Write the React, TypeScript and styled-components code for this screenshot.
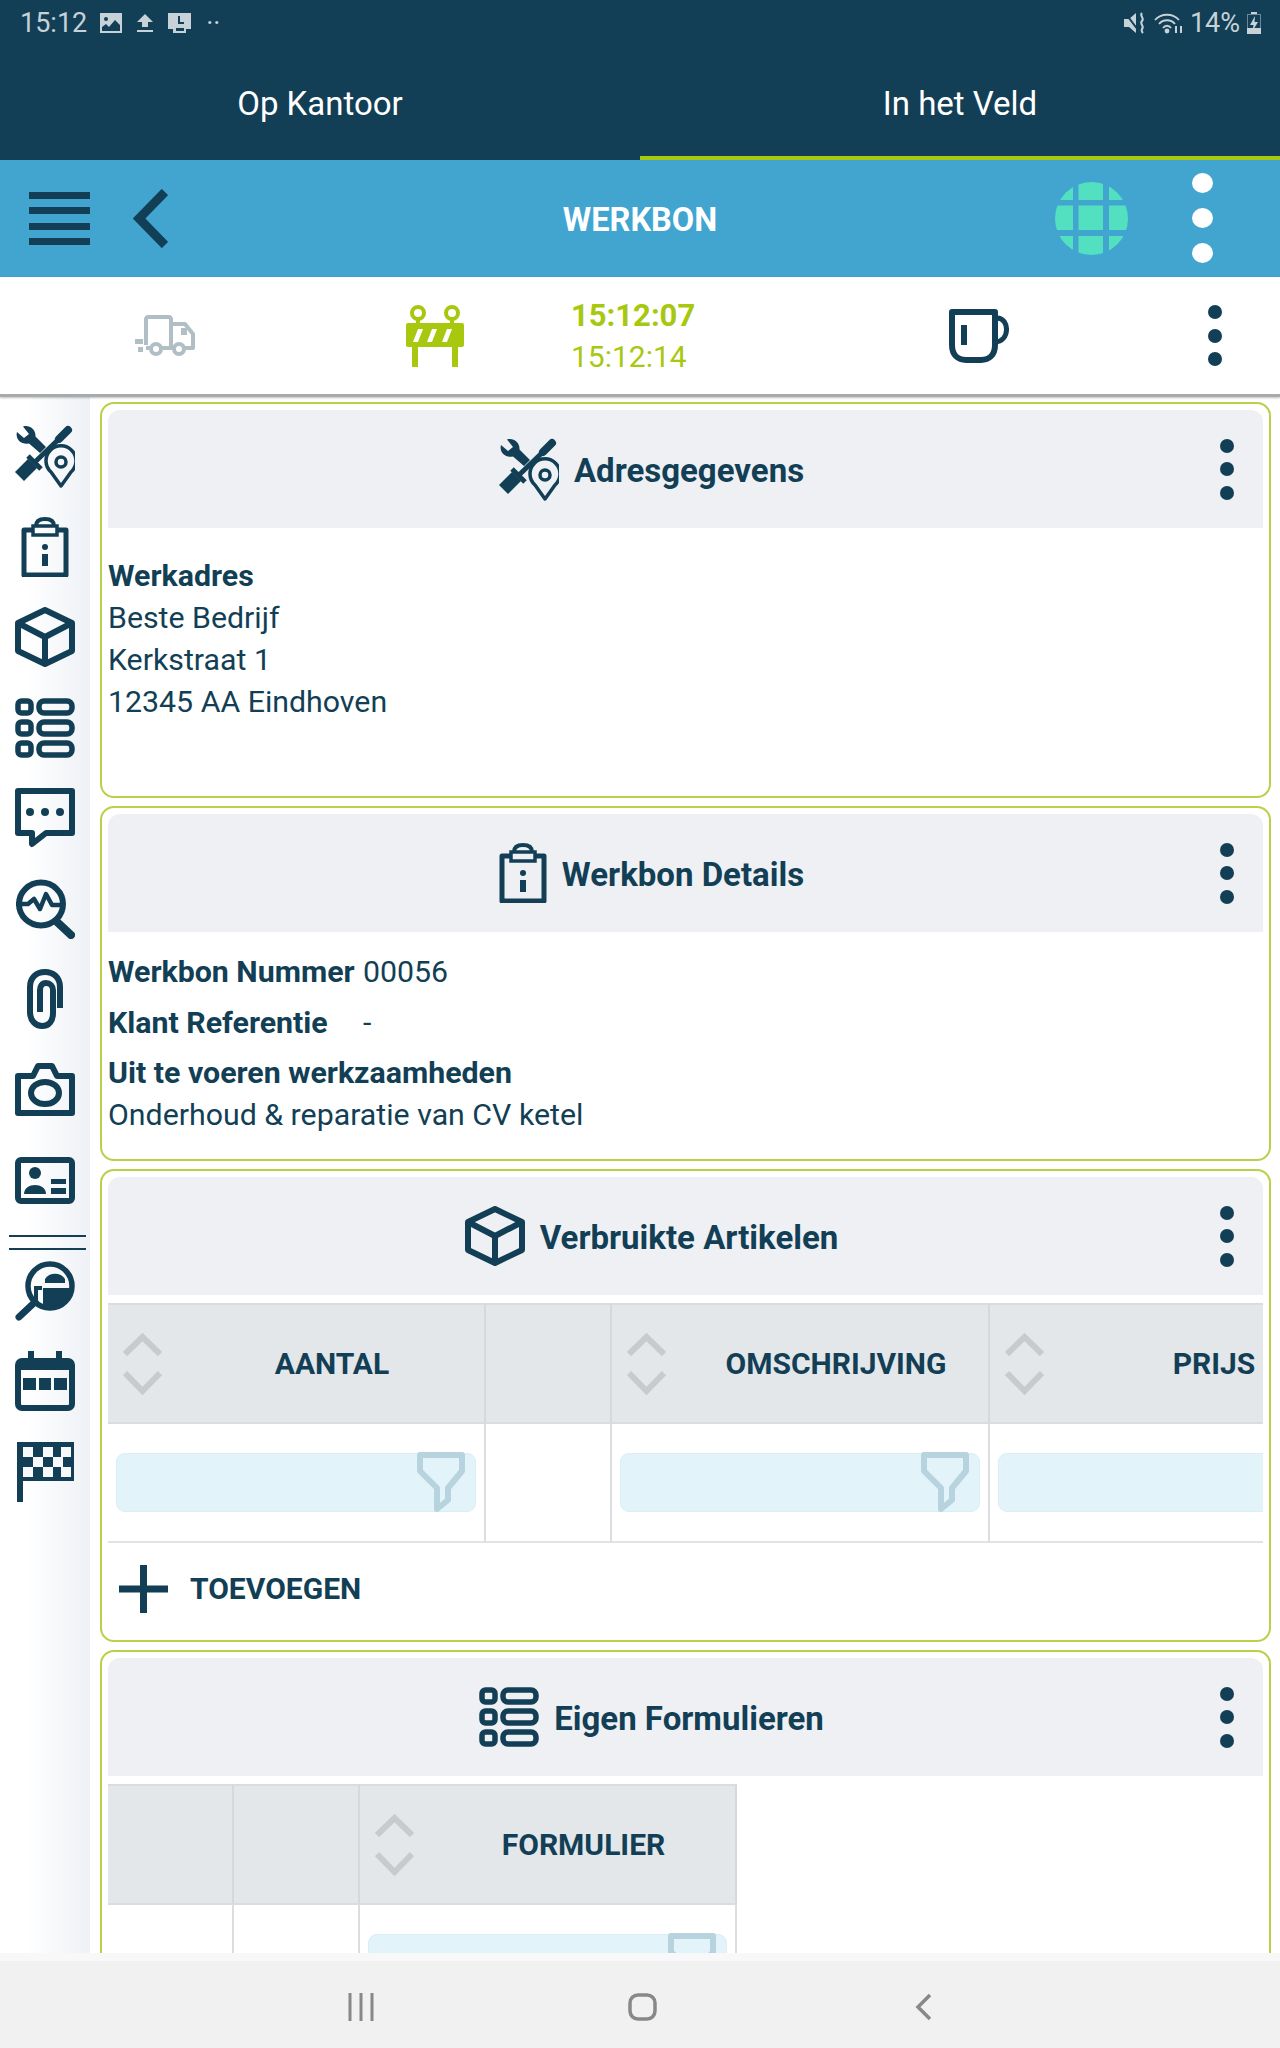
import React from "react"
import styled, { createGlobalStyle } from "styled-components"

const NAVY = "#123f55"
const LIME = "#a7c80f"
const MUTED = "#c6d2d8"

const GlobalStyle = createGlobalStyle`
  html, body {
    margin: 0;
    padding: 0;
    background: #fff;
  }
  body {
    font-family: Roboto, "Liberation Sans", sans-serif;
    color: ${NAVY};
  }
  * {
    box-sizing: border-box;
  }
`

const Page = styled.div`
  width: 1280px;
  height: 2048px;
  display: flex;
  flex-direction: column;
  overflow: hidden;
`

const DarkHeader = styled.header`
  height: 160px;
  flex: none;
  background: ${NAVY};
  display: flex;
  flex-direction: column;
`

const StatusBar = styled.div`
  height: 46px;
  flex: none;
  display: flex;
  align-items: center;
  padding: 0 19px 0 20px;
  color: ${MUTED};
  font-size: 27px;
`

const StatusTime = styled.span`
  margin-right: 13px;
`

const StatusIcons = styled.div`
  display: flex;
  align-items: center;
  gap: 15px;
`

const StatusRight = styled.div`
  margin-left: auto;
  display: flex;
  align-items: center;
  gap: 7px;
`

const Tabs = styled.nav`
  flex: 1;
  display: grid;
  grid-template-columns: 1fr 1fr;
`

const Tab = styled.div<{ $active?: boolean }>`
  display: flex;
  align-items: center;
  justify-content: center;
  padding-top: 4px;
  color: #fff;
  font-size: 33px;
  border-bottom: 4px solid ${(p) => (p.$active ? LIME : "transparent")};
`

const BlueBar = styled.div`
  height: 117px;
  flex: none;
  background: #41a5d0;
  display: grid;
  grid-template-columns: 1fr auto 1fr;
  align-items: center;
  padding-left: 29px;
  padding-right: 67px;
`

const BlueLeft = styled.div`
  display: flex;
  align-items: center;
  gap: 43px;
  color: ${NAVY};
`

const BlueRight = styled.div`
  display: flex;
  align-items: center;
  justify-content: flex-end;
  gap: 64px;
`

const PageTitle = styled.div`
  color: #fff;
  font-size: 32.5px;
  font-weight: 700;
  margin-left: 19px;
  margin-right: -19px;
  margin-top: 2px;
`

const BigDots = styled.div`
  display: flex;
  flex-direction: column;
  gap: 15px;
  margin-top: -2px;
`

const BigDot = styled.span`
  display: block;
  width: 21px;
  height: 20px;
  border-radius: 50%;
  background: #fff;
`

const ActionBar = styled.div`
  height: 120px;
  flex: none;
  background: #fff;
  display: grid;
  grid-template-columns: 330px 210px 310px 258px 172px;
  align-items: center;
  border-bottom: 3px solid #a8abac;
  box-shadow: 0 1px 2px rgba(0, 0, 0, 0.25);
  position: relative;
  z-index: 1;
`

const ActionCell = styled.div`
  display: flex;
  justify-content: center;
  align-items: center;
`

const DotsCell = styled.div`
  display: flex;
  justify-content: flex-end;
  padding-right: 58px;
`

const Clock = styled.div`
  padding-left: 31px;
  color: ${LIME};
  font-size: 30px;
  line-height: 41px;
`

const ClockStart = styled.div`
  font-weight: 700;
  font-size: 31px;
`

const Dots = styled.div`
  display: flex;
  flex-direction: column;
  gap: 9.5px;
`

const Dot = styled.span`
  display: block;
  width: 14px;
  height: 14px;
  border-radius: 50%;
  background: ${NAVY};
`

const Main = styled.main`
  height: 1556px;
  flex: none;
  display: flex;
  overflow: hidden;
`

const Sidebar = styled.aside`
  width: 90px;
  flex: none;
  padding-top: 14px;
  background: linear-gradient(90deg, #fff 30%, #eef1f6 100%);
  color: ${NAVY};
`

const SideItem = styled.div`
  height: 90.5px;
  display: flex;
  align-items: center;
  justify-content: center;
`

const SideDivider = styled.div`
  height: 20px;
  margin: 0 4px 0 9px;
  padding-top: 9px;
  &::before {
    content: "";
    display: block;
    height: 11px;
    border-top: 2px solid ${NAVY};
    border-bottom: 2px solid ${NAVY};
  }
`

const Content = styled.div`
  flex: 1;
  min-width: 0;
  padding: 5px 9px 0 10px;
  display: flex;
  flex-direction: column;
  gap: 8px;
`

const Card = styled.section`
  flex: none;
  border: 2px solid #b8d04a;
  border-radius: 14px;
  padding: 6px;
  background: #fff;
`

const CardHeader = styled.div`
  height: 118px;
  background: #eef0f4;
  border-radius: 12px 12px 0 0;
  display: flex;
  align-items: center;
`

const CardHeading = styled.div`
  flex: 1;
  display: flex;
  align-items: center;
  justify-content: center;
  gap: 15px;
  font-size: 33px;
  font-weight: 700;
`

const HeadingText = styled.span`
  margin-top: 3px;
`

const HeaderDots = styled.div`
  width: 68px;
  padding-right: 4px;
  display: flex;
  justify-content: center;
`

const AddressBody = styled.div`
  padding: 27px 0 67px;
  font-size: 30.3px;
  line-height: 42px;
`

const Strong = styled.div`
  font-weight: 700;
`

const DetailsBody = styled.div`
  padding: 19px 0 17px;
  font-size: 30.3px;
  line-height: 42px;
`

const DetailRow = styled.div`
  display: grid;
  grid-template-columns: 255px 1fr;
  margin-bottom: 8.5px;
`

const TableWrap = styled.div`
  margin-top: 8px;
  overflow: hidden;
`

const Table = styled.div<{ $columns: string }>`
  display: grid;
  grid-template-columns: ${(p) => p.$columns};
  width: max-content;
`

const HeadCell = styled.div`
  height: 121px;
  background: #e3e7ea;
  border-top: 2px solid #dbdcdc;
  border-bottom: 2px solid #dbdcdc;
  border-right: 2px solid #d6d8d9;
  display: flex;
  align-items: center;
  padding-left: 15px;
  font-size: 30px;
  font-weight: 700;
`

const HeadLabel = styled.span`
  flex: 1;
  text-align: center;
  padding-left: 18px;
`

const FilterCell = styled.div`
  height: 119px;
  border-bottom: 2px solid #e2e3e4;
  border-right: 2px solid #dcddde;
  padding: 29px 8px 0 8px;
  &:first-child {
    border-left: 2px solid #e2e3e4;
  }
`

const FilterInput = styled.div`
  position: relative;
  height: 59px;
  background: #e2f4fa;
  border: 1px solid #dcedf3;
  border-radius: 9px;
`

const FilterIconSlot = styled.div`
  position: absolute;
  top: -2px;
  right: 10px;
`

const AddRow = styled.div`
  height: 91px;
  display: flex;
  align-items: center;
  padding-left: 11px;
  gap: 22px;
  font-size: 30px;
  font-weight: 700;
  color: ${NAVY};
`

const ScreenGap = styled.div`
  height: 8px;
  flex: none;
  background: #f8f8f8;
`

const BottomNav = styled.footer`
  flex: 1;
  background: #f1f1f1;
  display: grid;
  grid-template-columns: repeat(3, 281px);
  justify-content: center;
  align-items: center;
  padding-left: 4px;
  padding-top: 4px;
`

const NavCell = styled.div`
  display: flex;
  justify-content: center;
`

const ToolsIcon = () => (
  <svg width="60" height="63" viewBox="0 0 60 63" fill="currentColor">
    <path d="M2 7L9 13L14 9L8 1.5C14-.5 21 4 20.5 11.5L31 22L25 28L14 18.5C6 20 0 14 2 7Z" />
    <path d="M0 47L9 56L22 43L13 34Z" />
    <path d="M13 31L26 44" stroke="currentColor" strokeWidth="5" />
    <path d="M20 37L46 12" stroke="currentColor" strokeWidth="5" />
    <path d="M44 14L53 5" stroke="currentColor" strokeWidth="8" strokeLinecap="round" />
    <path
      d="M46 61L36 47A15 15 0 1 1 56 47Z"
      fill="none"
      stroke="currentColor"
      strokeWidth="3.5"
      strokeLinejoin="round"
    />
    <circle cx="46" cy="37" r="5" fill="none" stroke="currentColor" strokeWidth="3.5" />
  </svg>
)

const ClipboardIcon = () => (
  <svg width="48" height="60" viewBox="0 0 48 60" fill="currentColor">
    <path d="M12 13H3V58H45V13H36" fill="none" stroke="currentColor" strokeWidth="5" strokeLinejoin="round" />
    <path d="M15 9C15 4 19 2 24 2C29 2 33 4 33 9" fill="none" stroke="currentColor" strokeWidth="4" />
    <rect x="12" y="9" width="24" height="9" fill="none" stroke="currentColor" strokeWidth="3.5" />
    <circle cx="24" cy="30" r="3" />
    <rect x="21" y="37" width="6" height="12" />
  </svg>
)

const BoxIcon = () => (
  <svg
    width="60"
    height="60"
    viewBox="0 0 60 60"
    fill="none"
    stroke="currentColor"
    strokeWidth="6"
    strokeLinejoin="round"
  >
    <path d="M30 3L57 16V44L30 57L3 44V16Z" />
    <path d="M3 16L30 30L57 16M30 30V57" />
  </svg>
)

const FormsIcon = () => (
  <svg width="60" height="60" viewBox="0 0 60 60" fill="none" stroke="currentColor" strokeWidth="5.5">
    {[0, 21, 42].map((y) => (
      <g key={y}>
        <rect x="3" y={y + 3} width="13" height="12" rx="3.5" />
        <rect x="24" y={y + 3} width="33" height="12" rx="5" />
      </g>
    ))}
  </svg>
)

const CommentIcon = () => (
  <svg width="60" height="60" viewBox="0 0 60 60" fill="currentColor">
    <path
      d="M3 3H57V45H31L17 56V45H3Z"
      fill="none"
      stroke="currentColor"
      strokeWidth="6"
      strokeLinejoin="round"
    />
    <circle cx="15" cy="24" r="4" />
    <circle cx="30" cy="24" r="4" />
    <circle cx="45" cy="24" r="4" />
  </svg>
)

const AnalyticsIcon = () => (
  <svg width="60" height="60" viewBox="0 0 60 60" fill="none" stroke="currentColor">
    <ellipse cx="26" cy="25" rx="22" ry="21.5" strokeWidth="6" />
    <path d="M41 42L56 56" strokeWidth="8" strokeLinecap="round" />
    <path d="M1 25H13L19 20L25 30L31 15L37 26H49" strokeWidth="4.5" strokeLinejoin="round" />
  </svg>
)

const ClipIcon = () => (
  <svg width="38" height="60" viewBox="0 0 38 60" fill="none" stroke="currentColor" strokeWidth="6">
    <path d="M34 39V18C34 8 27 3 19 3C10 3 4 9 4 18V43C4 52 10 57 16 57C23 57 27 52 27 44V21C27 17 24 14 20 14C16 14 14 17 14 21V43" />
  </svg>
)

const CameraIcon = () => (
  <svg width="60" height="53" viewBox="0 0 60 53" fill="none" stroke="currentColor" strokeWidth="6" strokeLinejoin="round">
    <path d="M3 13H18L23 3H37L42 13H57V50H3Z" />
    <ellipse cx="30" cy="30" rx="14" ry="11" />
  </svg>
)

const IdCardIcon = () => (
  <svg width="60" height="47" viewBox="0 0 60 47" fill="currentColor">
    <rect x="3" y="3" width="54" height="41" rx="3" fill="none" stroke="currentColor" strokeWidth="6" />
    <circle cx="20" cy="16" r="6" />
    <path d="M9 37C9 25 31 25 31 37Z" />
    <rect x="36" y="22" width="15" height="5" />
    <rect x="36" y="31" width="15" height="6" />
  </svg>
)

const SearchFolderIcon = () => (
  <svg width="60" height="60" viewBox="0 0 60 60" fill="currentColor">
    <circle cx="35" cy="25" r="22" fill="none" stroke="currentColor" strokeWidth="5.5" />
    <path d="M20 41L4 56" stroke="currentColor" strokeWidth="7" strokeLinecap="round" />
    <path d="M21 43V27H27" fill="none" stroke="currentColor" strokeWidth="4" />
    <path d="M30 18C34 11 46 11 50 18V22H30Z" />
    <path d="M28 27H56C56 34 50 43 36 45H28Z" />
  </svg>
)

const CalendarIcon = () => (
  <svg width="60" height="60" viewBox="0 0 60 60" fill="currentColor">
    <rect x="3" y="10" width="54" height="47" rx="4" fill="none" stroke="currentColor" strokeWidth="6" />
    <rect x="2" y="9" width="56" height="10" />
    <rect x="13" y="0" width="6" height="12" />
    <rect x="41" y="0" width="6" height="12" />
    <rect x="8" y="27" width="13" height="12" />
    <rect x="24" y="27" width="12" height="12" />
    <rect x="39" y="27" width="13" height="12" />
  </svg>
)

const FlagIcon = () => (
  <svg width="57" height="60" viewBox="0 0 57 60" fill="currentColor">
    <rect x="0" y="0" width="6" height="60" />
    <rect x="0" y="0" width="57" height="39" />
    {[
      [6, 5],
      [26, 5],
      [44, 5],
      [16, 15],
      [36, 15],
      [6, 25],
      [26, 25],
      [44, 25],
    ].map(([x, y]) => (
      <rect key={`${x}-${y}`} x={x} y={y} width="10" height="10" fill="#f6f8fa" />
    ))}
  </svg>
)

const TruckIcon = () => (
  <svg width="60" height="41" viewBox="0 0 60 41" fill="#b0bec5">
    <path d="M11 30V4C11 3 12 2 13 2H34C35 2 36 3 36 4V32" fill="none" stroke="#b0bec5" strokeWidth="4" />
    <path d="M36 9H50L58 19V33H36" fill="none" stroke="#b0bec5" strokeWidth="4" strokeLinejoin="round" />
    <rect x="46" y="13" width="6" height="7" />
    <path d="M11 33H50" stroke="#b0bec5" strokeWidth="4" />
    <circle cx="21" cy="34" r="5" fill="#fff" stroke="#b0bec5" strokeWidth="4" />
    <circle cx="44" cy="34" r="5" fill="#fff" stroke="#b0bec5" strokeWidth="4" />
    <rect x="0" y="24" width="8" height="5" />
    <rect x="3" y="32" width="5" height="5" />
  </svg>
)

const BarrierIcon = () => (
  <svg width="58" height="62" viewBox="0 0 58 62" fill={LIME}>
    <circle cx="12" cy="8" r="6" fill="none" stroke={LIME} strokeWidth="4" />
    <circle cx="46" cy="8" r="6" fill="none" stroke={LIME} strokeWidth="4" />
    <rect x="10" y="13" width="4" height="6" />
    <rect x="44" y="13" width="4" height="6" />
    <rect x="0" y="18" width="58" height="24" rx="2" />
    <path d="M7 37L12 24H17L12 37ZM21 37L26 24H31L26 37ZM36 37L41 24H46L41 37Z" fill="#fff" />
    <rect x="6" y="41" width="6" height="21" />
    <rect x="46" y="41" width="6" height="21" />
  </svg>
)

const MugIcon = () => (
  <svg width="60" height="54" viewBox="0 0 60 54" fill={NAVY} stroke="none">
    <path
      d="M3 3H46V36C46 46 40 51 32 51H17C9 51 3 46 3 36Z"
      fill="none"
      stroke={NAVY}
      strokeWidth="6"
      strokeLinejoin="round"
    />
    <path d="M48 9C61 9 61 33 46 33" fill="none" stroke={NAVY} strokeWidth="5" />
    <rect x="12" y="16" width="6" height="20" />
  </svg>
)

const GlobeIcon = () => {
  const bands: [number, number][] = [
    [0, 18],
    [23.5, 24.5],
    [54, 19],
  ]
  return (
    <svg width="73" height="73" viewBox="0 0 73 73" fill="#52e0c0">
      <defs>
        <clipPath id="globe-clip">
          <circle cx="36.5" cy="36.5" r="36.5" />
        </clipPath>
      </defs>
      <g clipPath="url(#globe-clip)">
        {bands.map(([x, w]) =>
          bands.map(([y, h]) => <rect key={`${x}-${y}`} x={x} y={y} width={w} height={h} />)
        )}
      </g>
    </svg>
  )
}

const HamburgerIcon = () => (
  <svg width="61" height="53" viewBox="0 0 61 53" fill="currentColor">
    <rect y="0" width="61" height="7" />
    <rect y="15" width="61" height="7" />
    <rect y="31" width="61" height="7" />
    <rect y="46" width="61" height="7" />
  </svg>
)

const BackIcon = () => (
  <svg width="35" height="59" viewBox="0 0 35 59" fill="none" stroke="currentColor" strokeWidth="9">
    <path d="M32 3L6 29.5L32 56" />
  </svg>
)

const SortIcon = () => (
  <svg width="39" height="62" viewBox="0 0 39 62" fill="none" stroke="#c8cacb" strokeWidth="6">
    <path d="M2 21L19.5 4L37 21" />
    <path d="M2 40L19.5 58L37 40" />
  </svg>
)

const FilterIcon = () => (
  <svg width="48" height="60" viewBox="0 0 48 60" fill="none" stroke="#b7d4de" strokeWidth="6" strokeLinejoin="round">
    <path d="M3 3H45V19L31 36V48L20 57V36L3 19Z" />
  </svg>
)

const PlusIcon = () => (
  <svg width="49" height="48" viewBox="0 0 49 48" fill="currentColor">
    <rect x="21" y="0" width="7" height="48" />
    <rect x="0" y="20.5" width="49" height="7" />
  </svg>
)

const ImageStatusIcon = () => (
  <svg width="22" height="20" viewBox="0 0 22 20" fill={MUTED}>
    <path d="M0 0H22V20H0ZM2 14V18H20V12L15 7L9 14L6 11Z" fillRule="evenodd" />
    <circle cx="6" cy="6" r="2" fill={NAVY} />
  </svg>
)

const UploadStatusIcon = () => (
  <svg width="16" height="18" viewBox="0 0 16 18" fill={MUTED}>
    <path d="M8 0L16 8H11V13H5V8H0Z" />
    <rect y="16" width="16" height="2" />
  </svg>
)

const SaveStatusIcon = () => (
  <svg width="23" height="20" viewBox="0 0 23 20" fill={MUTED}>
    <path d="M0 0H23V16H18V20H5V16H0Z" />
    <path d="M11 3V10H16" fill="none" stroke={NAVY} strokeWidth="2" />
    <rect x="8" y="15" width="8" height="3" fill={NAVY} />
  </svg>
)

const MuteStatusIcon = () => (
  <svg width="23" height="22" viewBox="0 0 23 22" fill={MUTED}>
    <path d="M0 7H5L12 1V21L5 15H0Z" />
    <path d="M2 2L14 18" stroke={NAVY} strokeWidth="2" />
    <path d="M18 1C15 4 21 6 18 9C15 12 21 14 18 17C17 19 18 20 19 21" fill="none" stroke={MUTED} strokeWidth="2" />
  </svg>
)

const WifiStatusIcon = () => (
  <svg width="29" height="21" viewBox="0 0 29 21" fill="none" stroke={MUTED} strokeWidth="1.8">
    <path d="M1 7C7 0 19 0 25 7" />
    <path d="M5 11C9 6 17 6 21 11" />
    <path d="M9 15C11 12 15 12 17 15" />
    <circle cx="13" cy="18" r="1.5" fill={MUTED} />
    <path d="M22 20V13M27 13V20" strokeWidth="2" />
  </svg>
)

const BatteryStatusIcon = () => (
  <svg width="14" height="22" viewBox="0 0 14 22" fill={MUTED}>
    <rect x="4" y="0" width="6" height="2" />
    <rect x="0.5" y="2.5" width="13" height="19" fill="none" stroke={MUTED} opacity="0.5" />
    <rect x="0" y="16" width="14" height="6" />
    <path d="M8 4L3 13H6.5L5.5 19L11 10H7.5Z" />
  </svg>
)

const MoreDots = () => (
  <Dots>
    <Dot />
    <Dot />
    <Dot />
  </Dots>
)

const sideIconsTop = [
  ToolsIcon,
  ClipboardIcon,
  BoxIcon,
  FormsIcon,
  CommentIcon,
  AnalyticsIcon,
  ClipIcon,
  CameraIcon,
  IdCardIcon,
]
const sideIconsBottom = [SearchFolderIcon, CalendarIcon, FlagIcon]

interface SectionProps {
  icon: React.ReactNode
  title: string
  children: React.ReactNode
}

const Section: React.FC<SectionProps> = ({ icon, title, children }) => (
  <Card>
    <CardHeader>
      <CardHeading>
        {icon}
        <HeadingText>{title}</HeadingText>
      </CardHeading>
      <HeaderDots>
        <MoreDots />
      </HeaderDots>
    </CardHeader>
    {children}
  </Card>
)

const FilterField = () => (
  <FilterCell>
    <FilterInput>
      <FilterIconSlot>
        <FilterIcon />
      </FilterIconSlot>
    </FilterInput>
  </FilterCell>
)

const SortHead: React.FC<{ label: string }> = ({ label }) => (
  <HeadCell>
    <SortIcon />
    <HeadLabel>{label}</HeadLabel>
  </HeadCell>
)

const App: React.FC = () => {
  return (
    <Page>
      <GlobalStyle />
      <DarkHeader>
        <StatusBar>
          <StatusTime>15:12</StatusTime>
          <StatusIcons>
            <ImageStatusIcon />
            <UploadStatusIcon />
            <SaveStatusIcon />
            <span>··</span>
          </StatusIcons>
          <StatusRight>
            <MuteStatusIcon />
            <WifiStatusIcon />
            <span>14%</span>
            <BatteryStatusIcon />
          </StatusRight>
        </StatusBar>
        <Tabs>
          <Tab>Op Kantoor</Tab>
          <Tab $active>In het Veld</Tab>
        </Tabs>
      </DarkHeader>
      <BlueBar>
        <BlueLeft>
          <HamburgerIcon />
          <BackIcon />
        </BlueLeft>
        <PageTitle>WERKBON</PageTitle>
        <BlueRight>
          <GlobeIcon />
          <BigDots>
            <BigDot />
            <BigDot />
            <BigDot />
          </BigDots>
        </BlueRight>
      </BlueBar>
      <ActionBar>
        <ActionCell>
          <TruckIcon />
        </ActionCell>
        <ActionCell>
          <BarrierIcon />
        </ActionCell>
        <Clock>
          <ClockStart>15:12:07</ClockStart>
          <div>15:12:14</div>
        </Clock>
        <ActionCell>
          <MugIcon />
        </ActionCell>
        <DotsCell>
          <MoreDots />
        </DotsCell>
      </ActionBar>
      <Main>
        <Sidebar>
          {sideIconsTop.map((Icon, i) => (
            <SideItem key={i}>
              <Icon />
            </SideItem>
          ))}
          <SideDivider />
          {sideIconsBottom.map((Icon, i) => (
            <SideItem key={i}>
              <Icon />
            </SideItem>
          ))}
        </Sidebar>
        <Content>
          <Section icon={<ToolsIcon />} title="Adresgegevens">
            <AddressBody>
              <Strong>Werkadres</Strong>
              <div>Beste Bedrijf</div>
              <div>Kerkstraat 1</div>
              <div>12345 AA Eindhoven</div>
            </AddressBody>
          </Section>
          <Section icon={<ClipboardIcon />} title="Werkbon Details">
            <DetailsBody>
              <DetailRow>
                <Strong>Werkbon Nummer</Strong>
                <div>00056</div>
              </DetailRow>
              <DetailRow>
                <Strong>Klant Referentie</Strong>
                <div>-</div>
              </DetailRow>
              <Strong>Uit te voeren werkzaamheden</Strong>
              <div>Onderhoud &amp; reparatie van CV ketel</div>
            </DetailsBody>
          </Section>
          <Section icon={<BoxIcon />} title="Verbruikte Artikelen">
            <TableWrap>
              <Table $columns="378px 126px 378px 378px">
                <SortHead label="AANTAL" />
                <HeadCell />
                <SortHead label="OMSCHRIJVING" />
                <SortHead label="PRIJS" />
                <FilterField />
                <FilterCell />
                <FilterField />
                <FilterField />
              </Table>
            </TableWrap>
            <AddRow>
              <PlusIcon />
              TOEVOEGEN
            </AddRow>
          </Section>
          <Section icon={<FormsIcon />} title="Eigen Formulieren">
            <TableWrap>
              <Table $columns="126px 126px 377px">
                <HeadCell />
                <HeadCell />
                <SortHead label="FORMULIER" />
                <FilterCell />
                <FilterCell />
                <FilterField />
              </Table>
            </TableWrap>
          </Section>
        </Content>
      </Main>
      <ScreenGap />
      <BottomNav>
        <NavCell>
          <svg width="26" height="28" viewBox="0 0 26 28" stroke="#888" strokeWidth="3">
            <path d="M2 0V28M13 0V28M24 0V28" />
          </svg>
        </NavCell>
        <NavCell>
          <svg width="29" height="28" viewBox="0 0 29 28" fill="none" stroke="#888" strokeWidth="3.5">
            <rect x="2" y="2" width="25" height="24" rx="8" />
          </svg>
        </NavCell>
        <NavCell>
          <svg width="17" height="28" viewBox="0 0 17 28" fill="none" stroke="#888" strokeWidth="3.5">
            <path d="M15 2L3 14L15 26" />
          </svg>
        </NavCell>
      </BottomNav>
    </Page>
  )
}

export default App
